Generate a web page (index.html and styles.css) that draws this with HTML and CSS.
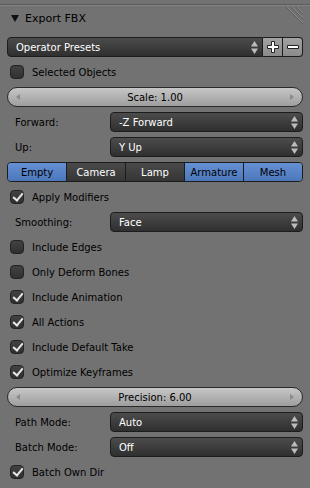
FILE: index.html
```html
<!DOCTYPE html>
<html lang="en">
<head>
  <meta charset="UTF-8">
  <title>Export FBX</title>
  <link rel="stylesheet" href="styles.css">
</head>
<body>
  <div class="panel">
    <div class="header">
      <svg class="tri" width="8" height="7" viewBox="0 0 8 7"><polygon points="0,0 8,0 4,7" fill="#111"/></svg>
      <span class="title">Export FBX</span>
      <svg class="grip" width="18" height="18" viewBox="0 0 18 18">
        <path d="M2 0 L18 16 M7 0 L18 11 M12 0 L18 6" stroke="#8a8a8a" stroke-width="1" fill="none"/>
        <path d="M1 0 L18 17 M6 0 L18 12 M11 0 L18 7" stroke="#5c5c5c" stroke-width="1" fill="none"/>
      </svg>
    </div>

    <div class="rows">
      <div class="presets">
        <div class="menu wide">Operator Presets<svg class="updown" width="7" height="13" viewBox="0 0 7 13"><path d="M3.5 0 L7 5.5 H0 Z M0 7.5 H7 L3.5 13 Z" fill="#bcbcbc"/></svg></div>
        <div class="tool">
          <svg width="12" height="12" viewBox="0 0 12 12"><path d="M4.5 0.5h3v4h4v3h-4v4h-3v-4h-4v-3h4z" fill="#fff" stroke="#222"/></svg>
        </div>
        <div class="tool last">
          <svg width="12" height="6" viewBox="0 0 12 6"><path d="M0.5 1.5h11v3h-11z" fill="#fff" stroke="#222"/></svg>
        </div>
      </div>

      <div class="check"><span class="box"></span>Selected Objects</div>
      <div class="slider"><span class="arr left"></span>Scale: 1.00<span class="arr right"></span></div>
      <div class="prop"><span class="lbl">Forward:</span><div class="menu">-Z Forward<svg class="updown" width="7" height="13" viewBox="0 0 7 13"><path d="M3.5 0 L7 5.5 H0 Z M0 7.5 H7 L3.5 13 Z" fill="#bcbcbc"/></svg></div></div>
      <div class="prop"><span class="lbl">Up:</span><div class="menu">Y Up<svg class="updown" width="7" height="13" viewBox="0 0 7 13"><path d="M3.5 0 L7 5.5 H0 Z M0 7.5 H7 L3.5 13 Z" fill="#bcbcbc"/></svg></div></div>

      <div class="enum">
        <span class="on">Empty</span>
        <span>Camera</span>
        <span>Lamp</span>
        <span class="on">Armature</span>
        <span class="on">Mesh</span>
      </div>

      <div class="check"><span class="box on"></span>Apply Modifiers</div>
      <div class="prop"><span class="lbl">Smoothing:</span><div class="menu">Face<svg class="updown" width="7" height="13" viewBox="0 0 7 13"><path d="M3.5 0 L7 5.5 H0 Z M0 7.5 H7 L3.5 13 Z" fill="#bcbcbc"/></svg></div></div>
      <div class="check"><span class="box"></span>Include Edges</div>
      <div class="check"><span class="box"></span>Only Deform Bones</div>
      <div class="check"><span class="box on"></span>Include Animation</div>
      <div class="check"><span class="box on"></span>All Actions</div>
      <div class="check"><span class="box on"></span>Include Default Take</div>
      <div class="check"><span class="box on"></span>Optimize Keyframes</div>
      <div class="slider"><span class="arr left"></span>Precision: 6.00<span class="arr right"></span></div>
      <div class="prop"><span class="lbl">Path Mode:</span><div class="menu">Auto<svg class="updown" width="7" height="13" viewBox="0 0 7 13"><path d="M3.5 0 L7 5.5 H0 Z M0 7.5 H7 L3.5 13 Z" fill="#bcbcbc"/></svg></div></div>
      <div class="prop"><span class="lbl">Batch Mode:</span><div class="menu">Off<svg class="updown" width="7" height="13" viewBox="0 0 7 13"><path d="M3.5 0 L7 5.5 H0 Z M0 7.5 H7 L3.5 13 Z" fill="#bcbcbc"/></svg></div></div>
      <div class="check"><span class="box on"></span>Batch Own Dir</div>
    </div>
  </div>
</body>
</html>
```

FILE: styles.css
```css
body {
  margin: 0;
  background: #727272;
  font-family: "DejaVu Sans", sans-serif;
  font-size: 10px;
  color: #000;
}

.panel {
  padding-top: 4px;
}

.header {
  height: 26px;
  border-top: 1px solid #5a5a5a;
  box-shadow: inset 0 1px 0 #838383;
  display: flex;
  align-items: center;
  padding-left: 11px;
  position: relative;
}

.tri {
  margin-right: 6px;
  margin-top: 1px;
}

.title {
  font-size: 11px;
}

.grip {
  position: absolute;
  right: 7px;
  top: 2px;
}

.rows {
  display: flex;
  flex-direction: column;
  gap: 5px;
  padding: 6px 7px 0 7px;
}

.rows > div {
  height: 20px;
  box-sizing: border-box;
}

/* dropdown menus */
.menu {
  flex: 1;
  height: 20px;
  box-sizing: border-box;
  border: 1px solid #1c1c1c;
  border-radius: 4px;
  background: linear-gradient(#4c4c4c, #2f2f2f);
  color: #fff;
  display: flex;
  align-items: center;
  padding-left: 8px;
  position: relative;
}

.updown {
  position: absolute;
  right: 4px;
  top: 3px;
}

.presets {
  display: flex;
}

.presets .menu {
  border-radius: 4px 0 0 4px;
}

.tool {
  width: 20px;
  height: 20px;
  box-sizing: border-box;
  border: 1px solid #1c1c1c;
  border-left: none;
  background: linear-gradient(#a2a2a2, #8a8a8a);
  display: flex;
  align-items: center;
  justify-content: center;
}

.tool.last {
  border-radius: 0 4px 4px 0;
}

/* checkboxes */
.check {
  display: flex;
  align-items: center;
  padding-left: 3px;
}

.box {
  width: 14px;
  height: 14px;
  box-sizing: border-box;
  border: 1px solid #222;
  border-radius: 4px;
  background: linear-gradient(#424242, #303030);
  margin-right: 8px;
  position: relative;
}

.box.on::after {
  content: "";
  position: absolute;
  left: 4px;
  top: 0px;
  width: 4px;
  height: 8px;
  border: solid #e8e8e8;
  border-width: 0 2px 2px 0;
  transform: rotate(40deg);
}

/* sliders */
.slider {
  border: 1px solid #2a2a2a;
  border-radius: 10px;
  background: linear-gradient(#c6c6c6, #9e9e9e);
  display: flex;
  align-items: center;
  justify-content: center;
  position: relative;
}

.arr {
  position: absolute;
  top: 6px;
  width: 0;
  height: 0;
  border-top: 3px solid transparent;
  border-bottom: 3px solid transparent;
}

.arr.left {
  left: 8px;
  border-right: 4px solid #8a8a8a;
}

.arr.right {
  right: 8px;
  border-left: 4px solid #8a8a8a;
}

/* label + menu rows */
.prop {
  display: flex;
  align-items: center;
}

.lbl {
  width: 103px;
  padding-left: 8px;
  box-sizing: border-box;
}

/* enum row */
.enum {
  display: flex;
  border: 1px solid #1c1c1c;
  border-radius: 4px;
  overflow: hidden;
}

.enum span {
  flex: 1;
  display: flex;
  align-items: center;
  justify-content: center;
  background: linear-gradient(#4a4a4a, #353535);
  color: #fff;
  border-left: 1px solid #1c1c1c;
}

.enum span:first-child {
  border-left: none;
}

.enum span.on {
  background: linear-gradient(#6690d4, #4d77bb);
  color: #000;
}
```
